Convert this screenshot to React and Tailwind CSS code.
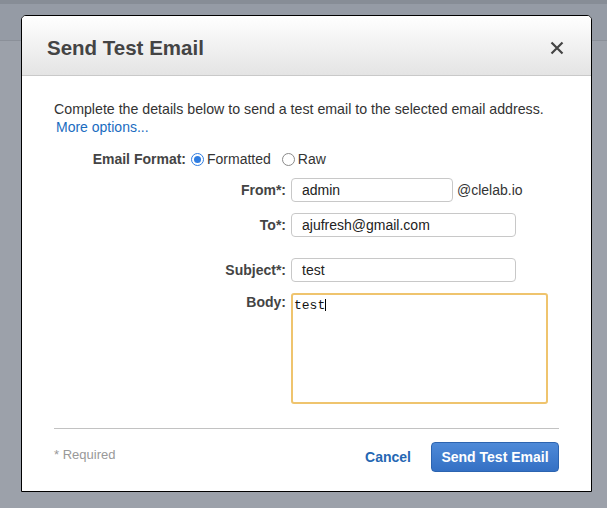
import React from 'react'

const font = { fontFamily: '"Liberation Sans", Arial, sans-serif' }

// ─── Radio dot ────────────────────────────────────────────────────────────────
const Radio = ({ checked }) => (
  <span className={`w-[13px] h-[13px] rounded-full flex items-center justify-center shrink-0
    ${checked ? "border border-[#2f7de1] bg-white" : "border border-[#8a8a8a] bg-white"}`}>
    {checked && <span className="w-[7px] h-[7px] rounded-full bg-[#2f7de1]" />}
  </span>
)

const Field = ({ label, children, className = "" }) => (
  <div className={`flex items-center ${className}`}>
    <span className="w-[237px] pr-[5px] text-right text-[14px] font-bold text-[#444]">{label}</span>
    {children}
  </div>
)

const Input = ({ value, w }) => (
  <div className={`${w} h-[24px] rounded-[4px] border border-[#c8c8c8] bg-white flex items-center px-[10px] text-[14px] text-[#222]`}>
    {value}
  </div>
)

export default function App() {
  return (
    <div
      style={font}
      className="w-[607px] h-[508px] overflow-hidden pl-[21px] pt-[15px]
        bg-[linear-gradient(to_bottom,#878d96_0,#878d96_4px,#959ba5_4px,#959ba5_40px,#8b9099_40px,#8b9099_41px,#9ca1aa_41px)]"
    >
      <div className="w-[571px] h-[477px] bg-white border border-black rounded-t-[5px] flex flex-col overflow-hidden">

        {/* Header */}
        <div className="h-[60px] shrink-0 flex items-center justify-between pl-[25px] pr-[27px] pt-[5px]
          bg-gradient-to-b from-white to-[#e4e4e4] border-b border-[#c9c9c9]">
          <h1 className="text-[20.5px] font-bold text-[#444]">Send Test Email</h1>
          <svg width="14" height="14" viewBox="0 0 14 14">
            <path d="M1.5 1.5 L12.5 12.5 M12.5 1.5 L1.5 12.5" stroke="#444" strokeWidth="2.2" />
          </svg>
        </div>

        {/* Body */}
        <div className="flex-1 px-[32px] pt-[24px]">
          <p className="text-[14.2px] text-[#333] leading-[18px]">
            Complete the details below to send a test email to the selected email address.
          </p>
          <p className="text-[14px] text-[#1a6cbf] leading-[18px] pl-[2px]">More options...</p>

          <div className="flex items-center mt-[14px] h-[18px]">
            <span className="w-[137px] pr-[5px] text-right text-[14px] font-bold text-[#444]">Email Format:</span>
            <Radio checked />
            <span className="ml-[3px] text-[14px] text-[#333]">Formatted</span>
            <span className="ml-[11px]"><Radio /></span>
            <span className="ml-[3px] text-[14px] text-[#333]">Raw</span>
          </div>

          <Field label="From*:" className="mt-[10px]">
            <Input value="admin" w="w-[162px]" />
            <span className="ml-[4px] text-[14px] text-[#333]">@clelab.io</span>
          </Field>
          <Field label="To*:" className="mt-[11px]">
            <Input value="ajufresh@gmail.com" w="w-[225px]" />
          </Field>
          <Field label="Subject*:" className="mt-[21px]">
            <Input value="test" w="w-[225px]" />
          </Field>

          <div className="flex items-start mt-[11px]">
            <span className="w-[237px] pr-[5px] text-right text-[14px] leading-[18px] font-bold text-[#444]">Body:</span>
            <div className="w-[257px] h-[111px] rounded-[3px] border-2 border-[#efc46e] bg-white px-[1px] pt-[1px] leading-[16px]">
              <span className="text-[13px] text-[#111] font-['Liberation_Mono',monospace]">test</span>
              <span className="inline-block w-px h-[12px] bg-black align-[-2px]" />
            </div>
          </div>

          <div className="mt-[24px] h-px bg-[#c2c2c2]" />

          <div className="flex items-center justify-between mt-[13px]">
            <span className="text-[13px] text-[#999] -mt-[4px]">* Required</span>
            <div className="flex items-center">
              <span className="text-[14px] font-bold text-[#2567b3]">Cancel</span>
              <button className="ml-[20px] w-[128px] h-[30px] rounded-[4px] border border-[#2c64b0]
                bg-gradient-to-b from-[#4e8ad8] to-[#3470c4] text-white text-[14px] font-bold">
                Send Test Email
              </button>
            </div>
          </div>
        </div>
      </div>
    </div>
  )
}
